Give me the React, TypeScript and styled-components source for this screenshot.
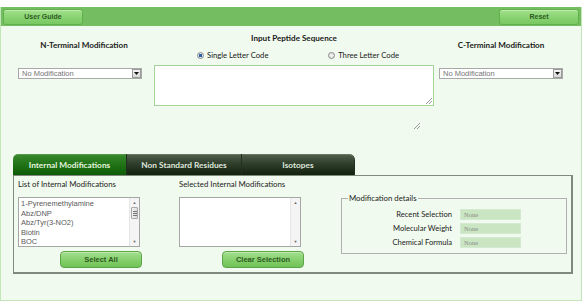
import React from "react";
import styled, { createGlobalStyle } from "styled-components";

const GlobalStyle = createGlobalStyle`
  html, body {
    margin: 0;
    padding: 0;
    background: #ffffff;
  }
  body {
    font-family: "Lato", "Open Sans", sans-serif;
  }
`;

const modifications = ["1-Pyrenemethylamine", "Abz/DNP", "Abz/Tyr(3-NO2)", "Biotin", "BOC"];
const tabs = [
  { label: "Internal Modifications", width: 114 },
  { label: "Non Standard Residues", width: 115 },
  { label: "Isotopes", width: 113 },
];
const details = ["Recent Selection", "Molecular Weight", "Chemical Formula"];

export default function App() {
  return (
    <>
      <GlobalStyle />
      <Page>
        <TopBar>
          <BarButton>User Guide</BarButton>
          <BarButton>Reset</BarButton>
        </TopBar>

        <TopSection>
          <SideColumn $left>
            <Heading $offset={8}>N-Terminal Modification</Heading>
            <DropDown>
              <span>No Modification</span>
              <DropArrow>
                <svg width="5" height="3" viewBox="0 0 5 3">
                  <path d="M0 0 L5 0 L2.5 3 Z" fill="#111" />
                </svg>
              </DropArrow>
            </DropDown>
          </SideColumn>

          <CenterColumn>
            <Heading>Input Peptide Sequence</Heading>
            <RadioRow>
              <RadioLabel>
                <Radio $checked />
                Single Letter Code
              </RadioLabel>
              <RadioLabel>
                <Radio />
                Three Letter Code
              </RadioLabel>
            </RadioRow>
            <SequenceBox>
              <Grip />
            </SequenceBox>
          </CenterColumn>

          <SideColumn>
            <Heading>C-Terminal Modification</Heading>
            <DropDown>
              <span>No Modification</span>
              <DropArrow>
                <svg width="5" height="3" viewBox="0 0 5 3">
                  <path d="M0 0 L5 0 L2.5 3 Z" fill="#111" />
                </svg>
              </DropArrow>
            </DropDown>
          </SideColumn>
        </TopSection>

        <GripRow>
          <Grip />
        </GripRow>

        <TabStrip>
          {tabs.map((t, i) => (
            <Tab
              key={t.label}
              $width={t.width}
              $active={i === 0}
              $first={i === 0}
              $last={i === tabs.length - 1}
            >
              {t.label}
            </Tab>
          ))}
        </TabStrip>

        <Panel>
          <ListColumn>
            <SmallLabel>List of Internal Modifications</SmallLabel>
            <ListBox>
              <ListItems>
                {modifications.map((m) => (
                  <li key={m}>{m}</li>
                ))}
              </ListItems>
              <ScrollTrack>
                <ScrollArrow>▲</ScrollArrow>
                <Thumb>
                  <span />
                  <span />
                  <span />
                </Thumb>
                <TrackFill />
                <ScrollArrow>▼</ScrollArrow>
              </ScrollTrack>
            </ListBox>
            <ActionButton $offset={42}>Select All</ActionButton>
          </ListColumn>

          <ListColumn>
            <SmallLabel>Selected Internal Modifications</SmallLabel>
            <ListBox>
              <ListItems />
              <ScrollTrack>
                <ScrollArrow>▲</ScrollArrow>
                <TrackFill />
                <ScrollArrow>▼</ScrollArrow>
              </ScrollTrack>
            </ListBox>
            <ActionButton $offset={43}>Clear Selection</ActionButton>
          </ListColumn>

          <Details>
            <legend>Modification details</legend>
            {details.map((d) => (
              <DetailRow key={d}>
                <DetailLabel>{d}</DetailLabel>
                <DetailValue>None</DetailValue>
              </DetailRow>
            ))}
          </Details>
        </Panel>
      </Page>
    </>
  );
}

const Page = styled.div`
  width: 582px;
  height: 294px;
  margin-top: 7px;
  background: #f1faee;
  border: 1px solid #c3e6b9;
  border-top: none;
  box-sizing: border-box;
`;

const TopBar = styled.div`
  height: 19px;
  background: #74bd61;
  display: flex;
  justify-content: space-between;
  align-items: center;
  padding: 0 2px 0 2px;
`;

const BarButton = styled.button`
  width: 80px;
  height: 16px;
  padding: 0;
  border: 1px solid #62b04d;
  border-radius: 3px;
  background: linear-gradient(#a2e08c, #86d16f 60%, #79c862);
  color: #2c5a20;
  font-family: "Liberation Sans", Arial, sans-serif;
  font-size: 7px;
  font-weight: bold;
  box-shadow: inset 0 1px 0 #bdeaa9;
`;

const TopSection = styled.div`
  display: flex;
  align-items: flex-start;
`;

const SideColumn = styled.div<{ $left?: boolean }>`
  display: flex;
  flex-direction: column;
  width: 124px;
  margin-left: ${(p) => (p.$left ? "17px" : "5px")};
  padding-top: 13px;
`;

const Heading = styled.div<{ $offset?: number }>`
  font-size: 8.1px;
  font-weight: bold;
  line-height: 12px;
  color: #1a1a1a;
  text-align: center;
  white-space: nowrap;
  padding-left: ${(p) => p.$offset ?? 0}px;
`;

const DropDown = styled.div`
  margin-top: 17px;
  height: 11px;
  box-sizing: border-box;
  border: 1px solid #a9a9a9;
  background: #ffffff;
  display: flex;
  align-items: center;
  justify-content: space-between;
  padding-left: 3px;
  font-family: "Liberation Sans", Arial, sans-serif;
  font-size: 7.5px;
  color: #757575;
`;

const DropArrow = styled.div`
  width: 9px;
  height: 9px;
  box-sizing: border-box;
  border: 1px solid #9a9a9a;
  background: linear-gradient(#f4f4f4, #d8d8d8);
  display: flex;
  align-items: center;
  justify-content: center;
`;

const CenterColumn = styled.div`
  width: 280px;
  margin-left: 12px;
  padding-top: 6px;
  display: flex;
  flex-direction: column;
`;

const RadioRow = styled.div`
  display: flex;
  justify-content: space-between;
  padding: 0 35px 0 43px;
  margin-top: 5px;
  height: 12px;
  align-items: center;
`;

const RadioLabel = styled.label`
  display: flex;
  align-items: center;
  gap: 3px;
  font-size: 7.7px;
  color: #222;
  white-space: nowrap;
`;

const Radio = styled.span<{ $checked?: boolean }>`
  width: 7px;
  height: 7px;
  border-radius: 50%;
  box-sizing: border-box;
  border: 1px solid #8a8a8a;
  background: ${(p) =>
    p.$checked
      ? "radial-gradient(circle, #2a5fa0 0 1.6px, #dfe7ef 2px)"
      : "radial-gradient(circle, #f6f6f6, #d9d9d9)"};
`;

const SequenceBox = styled.div`
  margin-top: 4px;
  height: 41px;
  box-sizing: border-box;
  background: #ffffff;
  border: 1px solid #a3d598;
  display: flex;
  justify-content: flex-end;
  align-items: flex-end;
  padding: 1px;
`;

const Grip = styled.div`
  width: 6px;
  height: 6px;
  background: linear-gradient(
    135deg,
    transparent 0 45%,
    #9a9a9a 45% 55%,
    transparent 55% 70%,
    #9a9a9a 70% 80%,
    transparent 80%
  );
`;

const GripRow = styled.div`
  height: 48px;
  display: flex;
  align-items: flex-start;
  padding: 17px 0 0 413px;
  box-sizing: border-box;
`;

const TabStrip = styled.div`
  display: flex;
  margin-left: 12px;
  height: 21px;
`;

const Tab = styled.div<{ $width: number; $active?: boolean; $first?: boolean; $last?: boolean }>`
  width: ${(p) => p.$width}px;
  box-sizing: border-box;
  display: flex;
  align-items: center;
  justify-content: center;
  font-size: 8.3px;
  font-weight: bold;
  color: ${(p) => (p.$active ? "#e6f5df" : "#dfe6dc")};
  background: ${(p) =>
    p.$active
      ? "linear-gradient(#3b8a2f, #237518 45%, #0d5c06)"
      : "linear-gradient(#52614c, #303f2b 45%, #12200e)"};
  border-right: 1px solid #222e20;
  border-top-left-radius: ${(p) => (p.$first ? "5px" : "0")};
  border-top-right-radius: ${(p) => (p.$last ? "6px" : "0")};
  box-shadow: inset 0 1px 0 rgba(255, 255, 255, 0.15);
`;

const Panel = styled.div`
  margin-left: 12px;
  width: 560px;
  height: 99px;
  box-sizing: border-box;
  border: 1px solid #7f8a7d;
  border-right-width: 2px;
  border-bottom-width: 2px;
  display: flex;
  align-items: flex-start;
  padding: 3px 0 0 4px;
`;

const ListColumn = styled.div`
  width: 161px;
  display: flex;
  flex-direction: column;
`;

const SmallLabel = styled.div`
  font-size: 7.8px;
  line-height: 10px;
  color: #222;
  white-space: nowrap;
`;

const ListBox = styled.div`
  margin-top: 8px;
  width: 122px;
  height: 50px;
  box-sizing: border-box;
  border: 1px solid #a6a6a6;
  background: #ffffff;
  display: flex;
`;

const ListItems = styled.ul`
  flex: 1;
  margin: 0;
  padding: 1px 0 0 2px;
  list-style: none;
  font-family: "Liberation Sans", Arial, sans-serif;
  font-size: 7.5px;
  line-height: 9.6px;
  color: #5a5a5a;
  overflow: hidden;
`;

const ScrollTrack = styled.div`
  width: 9px;
  display: flex;
  flex-direction: column;
  background: #f4f4f4;
  border-left: 1px solid #e6e6e6;
`;

const ScrollArrow = styled.div`
  height: 9px;
  font-size: 4px;
  color: #666;
  display: flex;
  align-items: center;
  justify-content: center;
`;

const Thumb = styled.div`
  height: 10px;
  margin: 0 1px;
  border: 1px solid #a8a8a8;
  border-radius: 1px;
  background: linear-gradient(90deg, #f2f2f2, #dcdcdc);
  display: flex;
  flex-direction: column;
  justify-content: center;
  align-items: center;
  gap: 1px;

  span {
    width: 4px;
    height: 1px;
    background: #777;
  }
`;

const TrackFill = styled.div`
  flex: 1;
`;

const ActionButton = styled.button<{ $offset: number }>`
  margin: 4px 0 0 ${(p) => p.$offset}px;
  width: 82px;
  height: 17px;
  padding: 0;
  border: 1px solid #5da348;
  border-radius: 4px;
  background: linear-gradient(#a4e08e, #84cf6c 55%, #70c257);
  color: #2c5a20;
  font-family: "Liberation Sans", Arial, sans-serif;
  font-size: 7.5px;
  font-weight: bold;
  box-shadow: inset 0 1px 0 #c1ebae;
`;

const Details = styled.fieldset`
  margin: 15px 0 0 1px;
  width: 226px;
  height: 60px;
  box-sizing: border-box;
  border: 1px solid #b0b0b0;
  padding: 4px 0 0 0;

  legend {
    font-size: 7.8px;
    line-height: 9px;
    color: #222;
    padding: 0 1px;
    margin-left: 6px;
  }
`;

const DetailRow = styled.div`
  display: flex;
  align-items: center;
  height: 14px;
`;

const DetailLabel = styled.div`
  width: 110px;
  text-align: right;
  font-size: 7.6px;
  color: #222;
  white-space: nowrap;
`;

const DetailValue = styled.div`
  margin-left: 8px;
  width: 61px;
  height: 11px;
  box-sizing: border-box;
  background: #c9e5c1;
  border: 1px solid #d4ead0;
  padding-left: 3px;
  font-family: "Liberation Serif", serif;
  font-size: 6.5px;
  line-height: 9px;
  color: #8a8a8a;
`;
